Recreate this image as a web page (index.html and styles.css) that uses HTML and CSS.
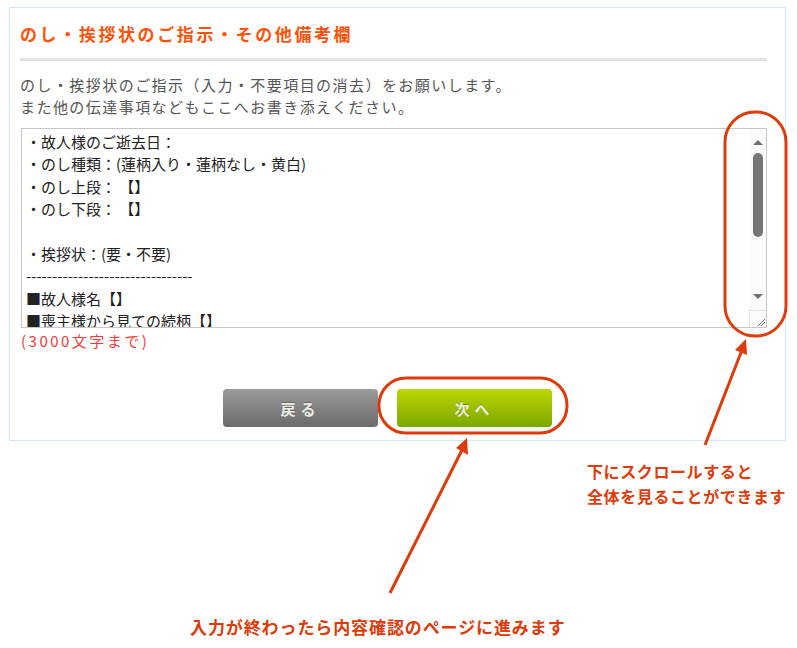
FILE: index.html
```html
<!DOCTYPE html>
<html lang="ja">
<head>
  <meta charset="UTF-8" />
  <title>のし・挨拶状のご指示・その他備考欄</title>
  <link rel="stylesheet" href="styles.css">
</head>
<body>
  <div class="page">
    <div class="panel">
      <h2 class="panel-title">のし・挨拶状のご指示・その他備考欄</h2>
      <p class="lead">のし・挨拶状のご指示（入力・不要項目の消去）をお願いします。<br>また他の伝達事項などもここへお書き添えください。</p>

      <div class="memo">
        <textarea class="memo-text" spellcheck="false">・故人様のご逝去日：
・のし種類：(蓮柄入り・蓮柄なし・黄白)
・のし上段： 【】
・のし下段： 【】

・挨拶状：(要・不要)
--------------------------------
■故人様名【】
■喪主様から見ての続柄【】</textarea>
        <div class="scrollbar">
          <span class="sb-up"></span>
          <span class="sb-thumb"></span>
          <span class="sb-fill"></span>
          <span class="sb-down"></span>
          <span class="sb-grip">
            <svg width="17" height="17" viewBox="0 0 17 17"><path d="M8 15 L15 8 M11 15 L15 11" stroke="#777" stroke-width="1"/></svg>
          </span>
        </div>
      </div>
      <p class="limit">(3000文字まで)</p>

      <div class="actions">
        <button type="button" class="btn btn-back">戻る</button>
        <button type="button" class="btn btn-next">次へ</button>
      </div>
    </div>

    <!-- annotations -->
    <svg class="marks" width="797" height="648" viewBox="0 0 797 648">
      <g fill="none" stroke="#de3b0b" stroke-width="3">
        <rect x="725" y="112" width="61" height="224" rx="30"/>
        <rect x="379" y="378" width="188" height="55" rx="27"/>
        <line x1="705" y1="445" x2="742" y2="350"/>
        <line x1="390" y1="593" x2="462" y2="450"/>
      </g>
      <g fill="#de3b0b">
        <polygon points="746,339 747,355 735,350"/>
        <polygon points="467,438 468,455 456,448"/>
      </g>
    </svg>
    <p class="note note-scroll">下にスクロールすると<br>全体を見ることができます</p>
    <p class="note note-next">入力が終わったら内容確認のページに進みます</p>
  </div>
</body>
</html>
```

FILE: styles.css
```css
/* page */
html, body {
  margin: 0;
  padding: 0;
  background: #fff;
  font-family: "Noto Sans CJK JP", "Noto Sans", sans-serif;
  color: #333;
}

.page {
  position: relative;
  width: 797px;
  height: 648px;
  padding-top: 7px;
  box-sizing: border-box;
}

/* bordered form panel */
.panel {
  margin-left: 9px;
  width: 777px;
  height: 434px;
  box-sizing: border-box;
  border: 1px solid #d3e9f9;
  padding: 0 18px 0 10px;
}

.panel-title {
  margin: 0;
  padding: 14px 0 12px;
  font-size: 17px;
  line-height: 24px;
  font-weight: bold;
  letter-spacing: 2.6px;
  color: #ff5208;
  border-bottom: 3px solid #e2e2e2;
}

.lead {
  margin: 13px 0 10px;
  font-size: 15px;
  line-height: 22px;
  letter-spacing: 1.45px;
  color: #555;
}

/* textarea with classic scrollbar */
.memo {
  display: flex;
  height: 200px;
  margin-left: 1px;
  border: 1px solid #c8c8c8;
  box-sizing: border-box;
  background: #fff;
}
.memo-text {
  flex: 1;
  border: none;
  outline: none;
  resize: none;
  overflow: hidden;
  margin: 0;
  padding: 2px 4px;
  font-family: "Noto Sans CJK JP", sans-serif;
  font-size: 15px;
  line-height: 22.4px;
  color: #222;
  background: transparent;
}
.scrollbar {
  width: 17px;
  display: flex;
  flex-direction: column;
  align-items: center;
  background: #fbfbfb;
}
.sb-up, .sb-down {
  width: 0;
  height: 0;
  border-left: 5px solid transparent;
  border-right: 5px solid transparent;
}
.sb-up {
  margin-top: 11px;
  border-bottom: 5px solid #707070;
}
.sb-down {
  border-top: 5px solid #707070;
  margin-bottom: 11px;
}
.sb-thumb {
  margin-top: 8px;
  width: 10px;
  height: 84px;
  border-radius: 5px;
  background: #767676;
}
.sb-fill {
  flex: 1;
}
.sb-grip {
  width: 17px;
  height: 17px;
  box-sizing: border-box;
  border-left: 1px solid #e4e4e4;
  border-top: 1px solid #e4e4e4;
  background: #fbfbfb;
}
.sb-grip svg {
  display: block;
}

.limit {
  margin: 2px 0 0 1px;
  font-size: 15px;
  line-height: 22px;
  letter-spacing: 2.5px;
  color: #f53a3a;
}

/* buttons */
.actions {
  display: flex;
  justify-content: center;
  gap: 19px;
  margin-top: 37px;
  padding-right: 12px;
}
.btn {
  width: 155px;
  height: 38px;
  border: none;
  border-radius: 4px;
  font-family: "Noto Sans CJK JP", sans-serif;
  font-size: 15px;
  font-weight: bold;
  letter-spacing: 5px;
  color: #eef0e6;
  text-shadow: 0 -1px 0 rgba(0,0,0,0.25);
  cursor: pointer;
}
.btn-back {
  background: linear-gradient(#9b9b9b, #6a6a6a);
}
.btn-next {
  background: linear-gradient(#bdd700, #7ca600);
}

/* annotation layer */
.marks {
  position: absolute;
  left: 0;
  top: 0;
  pointer-events: none;
}
.note {
  position: absolute;
  margin: 0;
  font-weight: bold;
  color: #de3b0b;
}
.note-scroll {
  left: 587px;
  top: 459px;
  font-size: 16px;
  line-height: 25px;
  letter-spacing: 0.6px;
}
.note-next {
  left: 190px;
  top: 614px;
  font-size: 17px;
  line-height: 26px;
  letter-spacing: 0.9px;
}
```
